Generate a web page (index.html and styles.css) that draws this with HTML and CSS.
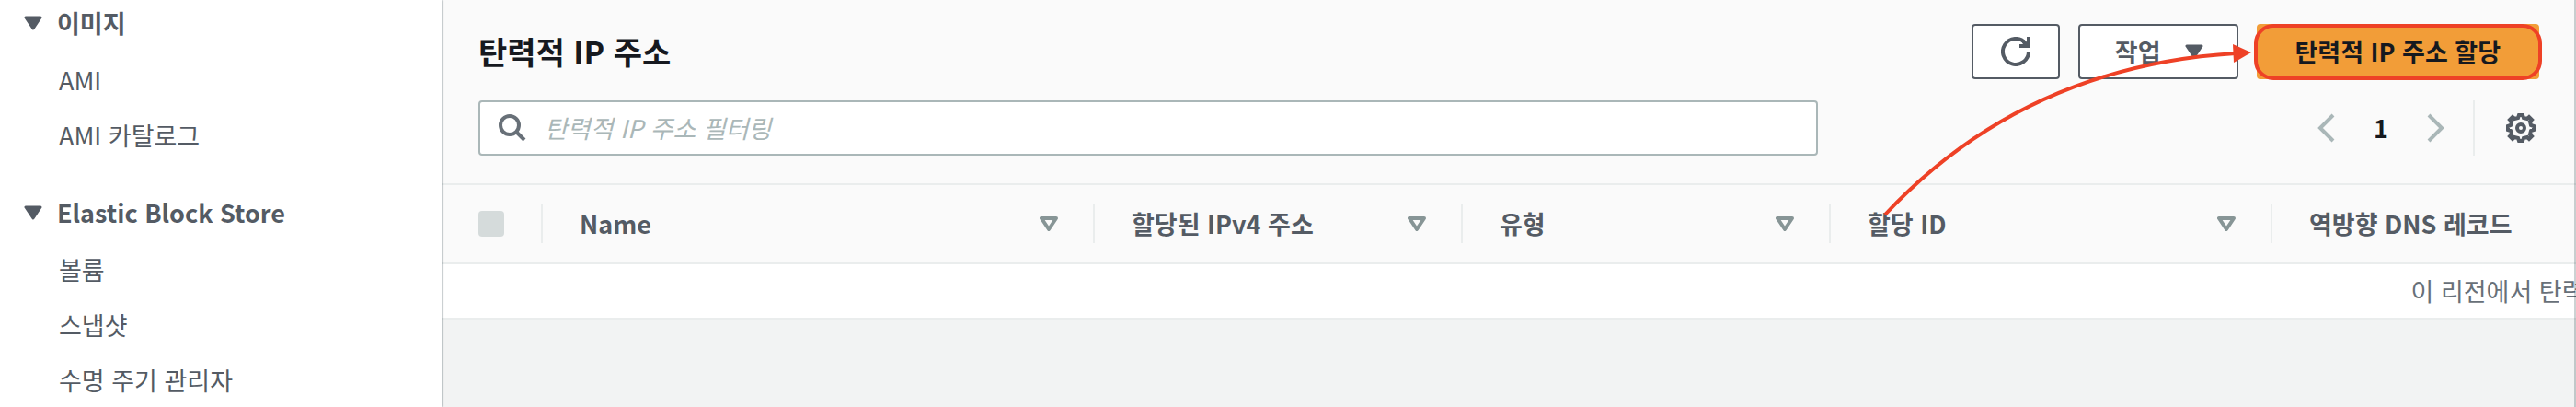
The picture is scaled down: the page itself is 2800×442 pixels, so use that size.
FILE: index.html
```html
<!DOCTYPE html>
<html lang="ko">
<head>
  <meta charset="UTF-8">
  <meta name="viewport" content="width=device-width, initial-scale=1.0">
  <title>탄력적 IP 주소</title>
  <link rel="stylesheet" href="styles.css">
</head>
<body>
  <nav class="sidebar">
    <section class="nav-group">
      <button class="nav-title" type="button">
        <svg class="caret" viewBox="0 0 20 16"><path d="M2 2H18L10 14Z"/></svg>
        이미지
      </button>
      <ul class="nav-list">
        <li><a href="#">AMI</a></li>
        <li><a href="#">AMI 카탈로그</a></li>
      </ul>
    </section>
    <section class="nav-group">
      <button class="nav-title" type="button">
        <svg class="caret" viewBox="0 0 20 16"><path d="M2 2H18L10 14Z"/></svg>
        Elastic Block Store
      </button>
      <ul class="nav-list">
        <li><a href="#">볼륨</a></li>
        <li><a href="#">스냅샷</a></li>
        <li><a href="#">수명 주기 관리자</a></li>
      </ul>
    </section>
  </nav>

  <main class="content">
    <header class="header">
      <div class="title-row">
        <h1>탄력적 IP 주소</h1>
        <div class="actions">
          <button class="button refresh" type="button" aria-label="새로 고침">
            <svg width="32" height="32" viewBox="0 0 32 32">
              <path class="line" d="M30 16A14 14 0 1 1 26.500 6.700"/>
              <path class="solid" d="M28 0H32V12H20V8H24L22 5L25 3L28 6Z"/>
            </svg>
          </button>
          <button class="button menu" type="button">
            작업
            <svg class="caret" viewBox="0 0 20 16"><path d="M2 2H18L10 14Z"/></svg>
          </button>
          <button class="button primary" type="button">탄력적 IP 주소 할당</button>
        </div>
      </div>
      <div class="filter-row">
        <label class="search">
          <svg width="30" height="30" viewBox="0 0 30 30">
            <circle cx="12" cy="12" r="10"/>
            <path d="M19 19L28 28"/>
          </svg>
          <input type="text" placeholder="탄력적 IP 주소 필터링" aria-label="탄력적 IP 주소 필터링">
        </label>
        <div class="pagination">
          <button class="page-arrow" type="button" aria-label="이전">
            <svg width="20" height="32" viewBox="0 0 20 32"><path d="M18 2L4 16L18 30"/></svg>
          </button>
          <button class="page" type="button">1</button>
          <button class="page-arrow" type="button" aria-label="다음">
            <svg width="20" height="32" viewBox="0 0 20 32"><path d="M2 2L16 16L2 30"/></svg>
          </button>
          <button class="settings" type="button" aria-label="설정">
            <svg width="32" height="32" viewBox="0 0 32 32">
              <path d="M14 2H18L19 5L23 6L25 4L28 7L26 9L27 13L30 14V18L27 19L26 23L28 25L25 28L23 26L19 27L18 30H14L13 27L9 26L7 28L4 25L6 23L5 19L2 18V14L5 13L6 9L4 7L7 4L9 6L13 5Z"/>
              <circle cx="16" cy="16" r="4"/>
            </svg>
          </button>
        </div>
      </div>
    </header>

    <div class="table-wrap">
      <table class="table">
        <thead>
          <tr>
            <th class="col-check"><div class="cell"><input type="checkbox" aria-label="모두 선택" disabled></div></th>
            <th class="col-name"><div class="cell">Name <svg class="sort" viewBox="0 0 20 16"><path d="M2 2H18L10 14Z"/></svg></div></th>
            <th class="col-ip"><div class="cell">할당된 IPv4 주소 <svg class="sort" viewBox="0 0 20 16"><path d="M2 2H18L10 14Z"/></svg></div></th>
            <th class="col-type"><div class="cell">유형 <svg class="sort" viewBox="0 0 20 16"><path d="M2 2H18L10 14Z"/></svg></div></th>
            <th class="col-id"><div class="cell">할당 ID <svg class="sort" viewBox="0 0 20 16"><path d="M2 2H18L10 14Z"/></svg></div></th>
            <th><div class="cell">역방향 DNS 레코드</div></th>
          </tr>
        </thead>
        <tbody>
          <tr>
            <td colspan="6">이 리전에서 탄력</td>
          </tr>
        </tbody>
      </table>
    </div>

    <!-- arrow pointing at the allocate button -->
    <svg class="arrow" width="410" height="200" viewBox="0 0 410 200">
      <path class="arrow-line" d="M9 193Q160 32 390 18"/>
      <path class="arrow-head" d="M387 8L407 17L388 28Z"/>
    </svg>
  </main>
</body>
</html>
```
FILE: styles.css
```css
* {
  box-sizing: border-box;
}

body {
  margin: 0;
  min-height: 100vh;
  display: grid;
  grid-template-columns: 480px minmax(0, 1fr);
  background-color: #f2f3f3;
  color: #545b64;
  font-family: "Noto Sans CJK KR", sans-serif;
  font-size: 27px;
  line-height: 40px;
}

button,
input {
  font: inherit;
  color: inherit;
}

button {
  padding: 0;
  border: none;
  background: none;
  cursor: pointer;
}

svg {
  flex: none;
}

/* sidebar */
.sidebar {
  position: relative;
  z-index: 1;
  padding-top: 5px;
  background-color: white;
  box-shadow: 1px 0 2px rgba(0, 28, 36, 0.3);
}

.nav-group {
  padding: 0 26px;
  margin-bottom: 44px;
}

.nav-group:last-child {
  margin-bottom: 0;
}

.nav-title {
  display: flex;
  align-items: center;
  gap: 16px;
  font-weight: bold;
}

.caret {
  width: 20px;
  height: 16px;
  fill: #545b64;
  stroke: #545b64;
  stroke-width: 3;
  stroke-linejoin: round;
}

.nav-list {
  display: grid;
  gap: 20px;
  margin: 0;
  padding: 22px 0 0 38px;
  list-style: none;
}

.nav-list a {
  display: block;
  color: #545b64;
  text-decoration: none;
}

/* header */
.content {
  position: relative;
  overflow: hidden;
}

.content::after {
  content: "";
  position: absolute;
  top: 0;
  right: 0;
  width: 2px;
  height: 100%;
  background-color: rgba(0, 28, 36, 0.2);
}

.header {
  display: grid;
  gap: 23px;
  padding: 26px 40px 30px;
  background-color: #fafafa;
  border-bottom: 2px solid #eaeded;
}

.title-row,
.filter-row {
  display: flex;
  align-items: center;
  justify-content: space-between;
}

h1 {
  margin: 0;
  color: #16191f;
  font-size: 34px;
  font-weight: bold;
}

.actions {
  display: flex;
  gap: 20px;
}

.button {
  display: flex;
  align-items: center;
  justify-content: center;
  height: 60px;
  padding: 0 38px;
  border: 2px solid #545b64;
  border-radius: 4px;
  background-color: white;
  font-weight: bold;
}

.refresh {
  padding: 0 30px;
}

.refresh .line {
  fill: none;
  stroke: #545b64;
  stroke-width: 4;
}

.refresh .solid {
  fill: #545b64;
}

.menu {
  gap: 26px;
  padding: 0 36px 0 38px;
}

.primary {
  position: relative;
  padding: 0 40px;
  border-color: #f29d38;
  background-color: #f29d38;
  color: #16191f;
}

.primary::after {
  content: "";
  position: absolute;
  inset: -2px -5px -3px;
  border: 4px solid #ee4126;
  border-radius: 21px;
}

.search {
  display: flex;
  align-items: center;
  gap: 20px;
  width: 65%;
  height: 60px;
  padding: 0 20px;
  border: 2px solid #aab7b8;
  border-radius: 4px;
  background-color: white;
}

.search svg {
  fill: none;
  stroke: #687078;
  stroke-width: 4;
}

.search input {
  flex: 1;
  min-width: 0;
  padding: 0;
  border: none;
  outline: none;
  background: none;
}

.search input::placeholder {
  color: #aab7b8;
  font-style: italic;
}

.pagination {
  display: flex;
  align-items: center;
}

.pagination svg {
  display: block;
  fill: none;
  stroke: #aab7b8;
  stroke-width: 4;
}

.page {
  width: 100px;
  color: #16191f;
  font-weight: bold;
}

.settings {
  height: 60px;
  margin-left: 30px;
  padding: 0 4px 0 34px;
  border-left: 2px solid #eaeded;
}

.pagination .settings svg {
  stroke: #545b64;
}

/* table */
.table-wrap {
  overflow: hidden;
}

.table {
  width: 4470px;
  table-layout: fixed;
  border-collapse: separate;
  border-spacing: 0;
}

th,
td {
  padding: 0;
  border-bottom: 2px solid #eaeded;
}

th {
  height: 86px;
  background-color: #fafafa;
  text-align: left;
}

.cell {
  display: flex;
  align-items: center;
  justify-content: space-between;
  height: 42px;
  padding: 0 38px 0 40px;
  border-right: 2px solid #eaeded;
}

.col-check {
  width: 110px;
}

.col-name {
  width: 600px;
}

.col-ip,
.col-type {
  width: 400px;
}

.col-id {
  width: 480px;
}

.sort {
  width: 20px;
  height: 16px;
  fill: none;
  stroke: #879596;
  stroke-width: 4;
  stroke-linejoin: round;
}

input[type="checkbox"] {
  appearance: none;
  width: 28px;
  height: 28px;
  margin: 0;
  border-radius: 4px;
  background-color: #d5dbdb;
}

td {
  height: 60px;
  background-color: white;
  color: #687078;
  text-align: center;
}

/* annotation arrow */
.arrow {
  position: absolute;
  top: 40px;
  right: 350px;
  pointer-events: none;
}

.arrow-line {
  fill: none;
  stroke: #ee4126;
  stroke-width: 4;
}

.arrow-head {
  fill: #ee4126;
}
```
